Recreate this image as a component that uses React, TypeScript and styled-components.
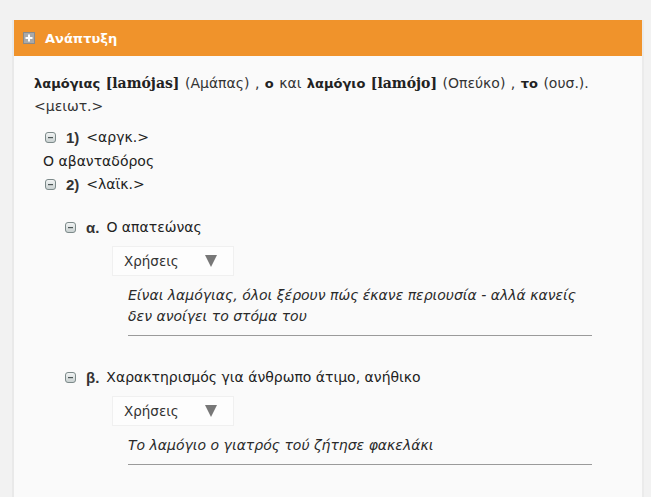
import styled, { createGlobalStyle } from 'styled-components'

// -- Global --
const GlobalStyle = createGlobalStyle`
  html, body {
    margin: 0;
    padding: 0;
    background-color: #f2f2f2;
  }
  body {
    font-family: "DejaVu Sans", Verdana, sans-serif;
    color: #222222;
  }
`

// -- Panel --
const Page = styled.div`
  padding: 20px 7px 0 12px;
`

const Panel = styled.section`
  background-color: #fafafa;
  border-left: 2px solid #e9e9e9;
  border-right: 2px solid #ebebeb;
  min-height: 477px;
`

const PanelHeader = styled.div`
  display: flex;
  align-items: center;
  gap: 10px;
  height: 36px;
  padding: 0 9px;
  background-color: #f0932b;
  color: #ffffff;
  font-size: 13px;
  font-weight: 700;
`

const PanelBody = styled.div`
  padding: 16px 30px 20px 20px;
  font-size: 14px;
  line-height: 23px;
`

// -- Lemma --
const Lemma = styled.p`
  margin: 0 0 8px 0;
  word-spacing: 1px;
  color: #333333;
`

const Word = styled.b`
  font-size: 13px;
  font-weight: 700;
  color: #222222;
`

const Phonetic = styled.b`
  font-family: "DejaVu Serif", "Liberation Serif", serif;
  font-size: 14px;
  line-height: 1;
  font-weight: 700;
  color: #222222;
`

const Register = styled.span`
  display: inline-block;
`

// -- Senses --
const Sense = styled.div<{ $indent: number }>`
  margin-left: ${(p) => p.$indent}px;
`

const SenseHead = styled.div`
  display: flex;
  align-items: center;
  height: 23px;
`

const SenseNum = styled.b`
  font-family: "Liberation Sans", Arial, sans-serif;
  font-size: 15px;
  font-weight: 700;
  margin: 0 7px 0 10px;
  color: #333333;
`

const Definition = styled.div`
  margin-left: -2px;
  line-height: 24px;
`

const SubSense = styled.div<{ $top: number }>`
  margin: ${(p) => p.$top}px 0 0 20px;
`

const Usage = styled.div`
  margin: 7px 0 0 63px;
  width: 464px;
`

const UsageToggle = styled.div`
  display: flex;
  align-items: center;
  justify-content: space-between;
  box-sizing: border-box;
  width: 122px;
  height: 30px;
  padding: 0 16px 0 11px;
  margin-left: -16px;
  background-color: #fdfdfd;
  border: 1px solid #f0f0f0;
  font-size: 13.5px;
  color: #333333;
`

const Triangle = styled.span`
  width: 0;
  height: 0;
  border-left: 6.5px solid transparent;
  border-right: 6.5px solid transparent;
  border-top: 12px solid #777777;
`

const Example = styled.p`
  margin: 9px 0 0 0;
  padding-bottom: 8px;
  border-bottom: 1px solid #9a9a9a;
  font-style: italic;
  line-height: 21px;
  color: #2a2a2a;
`

// -- Icons --
const MinusIcon = () => (
  <svg width="11" height="11" viewBox="0 0 11 11">
    <defs>
      <linearGradient id="mg" x1="0" y1="0" x2="0" y2="1">
        <stop offset="0" stopColor="#f4f6f6" />
        <stop offset="1" stopColor="#c8d0d0" />
      </linearGradient>
    </defs>
    <rect x="0.5" y="0.5" width="10" height="10" rx="2.5" fill="url(#mg)" stroke="#7d8a8a" />
    <rect x="3" y="5" width="5" height="1.2" fill="#4c5656" />
  </svg>
)

const PlusIcon = () => (
  <svg width="12" height="12" viewBox="0 0 12 12">
    <rect x="0" y="0" width="12" height="12" fill="#8a8a8a" />
    <rect x="1" y="1" width="10" height="10" fill="#a9a9a9" />
    <rect x="5" y="2.5" width="2" height="7" fill="#ffffff" />
    <rect x="2.5" y="5" width="7" height="2" fill="#ffffff" />
  </svg>
)

// -- Component --
const App = () => {
  return (
    <>
      <GlobalStyle />
      <Page>
        <Panel>
          <PanelHeader>
            <PlusIcon />
            <span>Ανάπτυξη</span>
          </PanelHeader>
          <PanelBody>
            <Lemma>
              <Word>λαμόγιας</Word> <Phonetic>[lamójas]</Phonetic> (Αμάπας) , <Word>ο</Word> και{' '}
              <Word>λαμόγιο</Word> <Phonetic>[lamójo]</Phonetic> (Οπεύκο) , <Word>το</Word> (ουσ.).{' '}
              <Register>&lt;μειωτ.&gt;</Register>
            </Lemma>

            <Sense $indent={11}>
              <SenseHead>
                <MinusIcon />
                <SenseNum>1)</SenseNum>
                <span>&lt;αργκ.&gt;</span>
              </SenseHead>
              <Definition>Ο αβανταδόρος</Definition>
            </Sense>

            <Sense $indent={11}>
              <SenseHead>
                <MinusIcon />
                <SenseNum>2)</SenseNum>
                <span>&lt;λαϊκ.&gt;</span>
              </SenseHead>

              <SubSense $top={20}>
                <SenseHead>
                  <MinusIcon />
                  <SenseNum>α.</SenseNum>
                  <span>Ο απατεώνας</span>
                </SenseHead>
                <Usage>
                  <UsageToggle>
                    Χρήσεις
                    <Triangle />
                  </UsageToggle>
                  <Example>
                    Είναι λαμόγιας, όλοι ξέρουν πώς έκανε περιουσία - αλλά κανείς δεν ανοίγει το στόμα του
                  </Example>
                </Usage>
              </SubSense>

              <SubSense $top={30}>
                <SenseHead>
                  <MinusIcon />
                  <SenseNum>β.</SenseNum>
                  <span>Χαρακτηρισμός για άνθρωπο άτιμο, ανήθικο</span>
                </SenseHead>
                <Usage>
                  <UsageToggle>
                    Χρήσεις
                    <Triangle />
                  </UsageToggle>
                  <Example>Το λαμόγιο ο γιατρός τού ζήτησε φακελάκι</Example>
                </Usage>
              </SubSense>
            </Sense>
          </PanelBody>
        </Panel>
      </Page>
    </>
  )
}

export default App
